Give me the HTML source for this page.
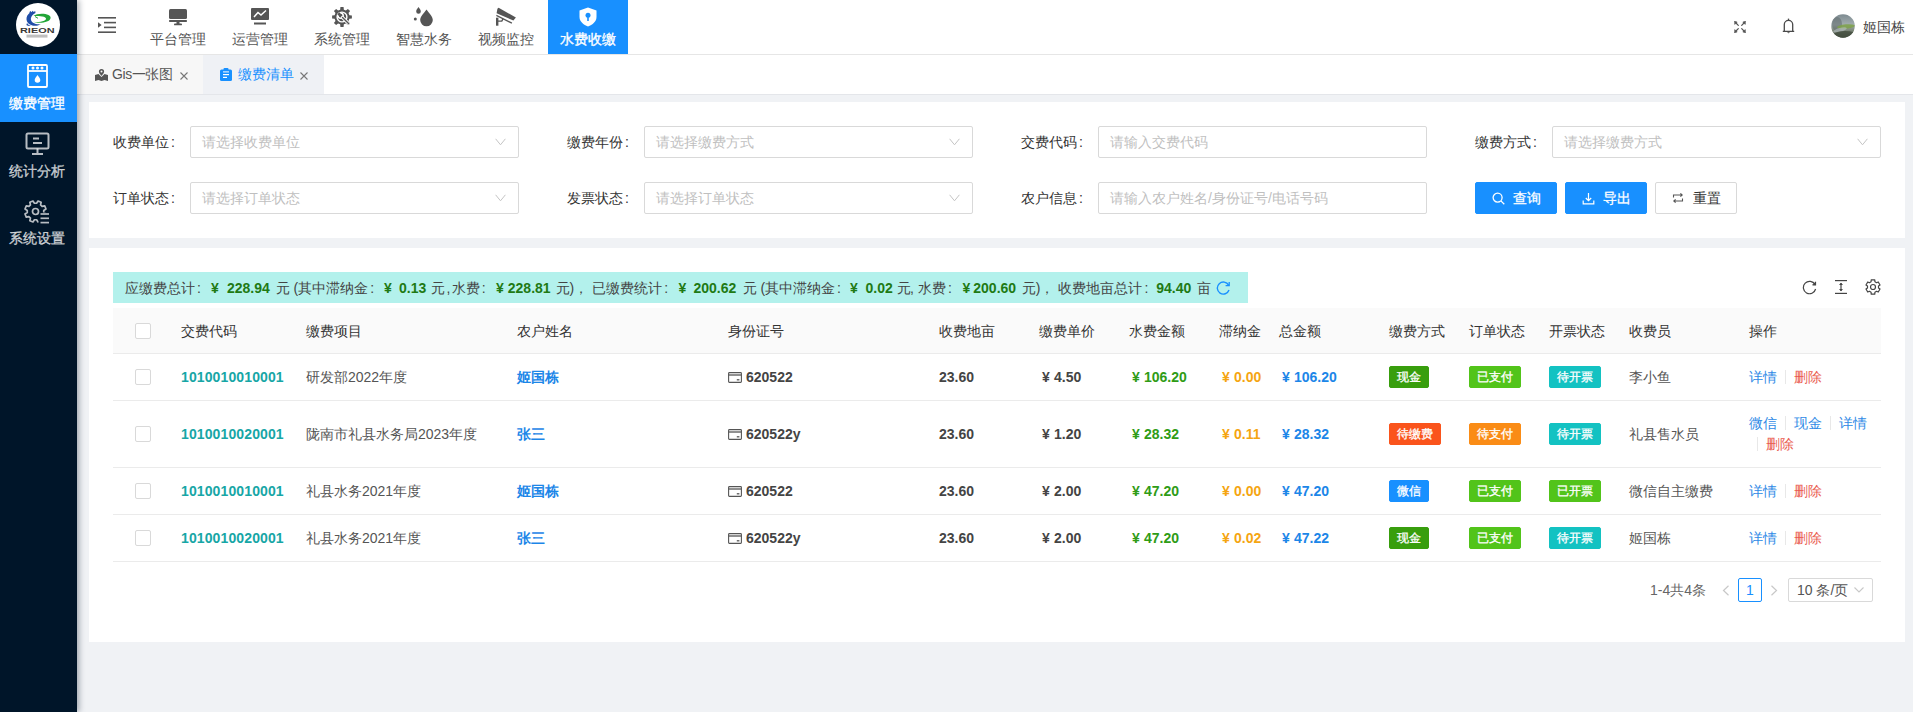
<!DOCTYPE html>
<html><head><meta charset="utf-8">
<style>
*{box-sizing:border-box;margin:0;padding:0}
html,body{width:1913px;height:712px;overflow:hidden}
body{background:#f0f2f5;font-family:"Liberation Sans",sans-serif;font-size:14px;color:#333;position:relative}
.abs{position:absolute}
#side{left:0;top:0;width:77px;height:712px;background:#001529;box-shadow:2px 0 6px rgba(0,21,41,.35);z-index:5}
#logo{left:16px;top:3px;width:44px;height:44px;border-radius:50%;background:#fff}
.sitem{left:0;width:77px;height:68px;color:rgba(255,255,255,.7);text-align:center}
.sitem .t{-webkit-text-stroke:0.35px currentColor;position:absolute;left:0;width:77px;text-align:center;font-size:14px;line-height:20px}
#header{left:77px;top:0;width:1836px;height:55px;background:#fff;border-bottom:1px solid #e6e6e6}
.nav{top:0;width:80px;height:54px;color:#555;text-align:center}
.nav .t{position:absolute;left:0;top:29px;width:80px;line-height:20px;font-size:14px}
.nav svg{position:absolute;left:31px;top:8px}
.nav.on{background:#1890ff;color:#fff}
.nav.on .t{-webkit-text-stroke:0.35px #fff}
#tabs{left:77px;top:55px;width:1836px;height:40px;background:#fff;border-bottom:1px solid #e4e6ea}
.tab{top:0;height:39px;line-height:39px;font-size:14px}
.card{background:#fff;left:89px;width:1816px}
.lbl{font-size:14px;color:#333;line-height:32px;height:32px;text-align:right;width:77px}
.inp{height:32px;width:329px;border:1px solid #d9d9d9;border-radius:2px;background:#fff;color:#bfbfbf;line-height:30px;padding-left:11px;font-size:14px}
.inp svg{position:absolute;right:12px;top:11px}
.colon{display:inline-block;margin:0 0 0 2px}
.btn{top:182px;width:82px;height:32px;border-radius:2px;line-height:30px;font-size:14px}
.btn.p{background:#1890ff;color:#fff;border:1px solid #1890ff;-webkit-text-stroke:0.3px #fff}
.btn.d{background:#fff;color:#333;border:1px solid #d9d9d9}
.sum{left:113px;top:272px;width:1135px;height:31px;background:#b3f1ec;line-height:33px;color:#444;white-space:nowrap}
.sum span{position:absolute;top:0}
.g{color:#1f7a14;font-weight:bold}
.th{left:113px;top:308px;width:1768px;height:46px;background:#fafafa;border-bottom:1px solid #ebebeb}
.tr{left:113px;width:1768px;border-bottom:1px solid #ebebeb;background:#fff}
.c{position:absolute;white-space:nowrap;color:#555}
.th .c{color:#333}
.cb{position:absolute;left:22px;width:16px;height:16px;border:1px solid #d9d9d9;border-radius:2px;background:#fff}
.c.code{color:#17a6a6;font-weight:bold;letter-spacing:0.12px}
.c.name{color:#1c86e8;font-weight:bold}
.c.bold{font-weight:bold;color:#444}
.y{display:inline-block;width:15px;padding-left:3px}
.tag{-webkit-text-stroke:0.3px #fff;display:inline-block;position:relative;top:-1px;height:22px;line-height:20px;padding:0 7px;border-radius:2px;color:#fff;font-size:12px;border:1px solid transparent}
.lk{color:#2f8ae6}
.del{color:#ea5b4f}
.c.fee{color:#2f9c16;font-weight:bold}
.c.late{color:#f5a511;font-weight:bold}
.c.tot{color:#1c86e8;font-weight:bold}

.dv{display:inline-block;width:1px;height:14px;background:#e8e8e8;vertical-align:-2px;margin:0 8px}
</style></head><body>

<!-- SIDEBAR -->
<div id="side" class="abs">
  <div id="logo" class="abs">
    <svg width="44" height="44" viewBox="0 0 44 44">
      <path d="M13 9.5 l1.5-1.5 1 1.2 1.2-1.4 1 1.3 1.5-1.2 0.3 2.2 c-2.5 1.2-4.2 3-4.6 5.2-.4 2.6 1.6 4.8 5 5.6 1.6.4 3.4.4 5 .1-2.4 1.6-5.6 2.3-8.6 1.6-3.4-.8-5.6-3.2-5.8-6-.2-2.6.9-5 3.5-7.1z" fill="#1f4ea8"/>
      <path d="M11 20 c1 1.5 2.5 2.5 4 3 -1.8.2-3.5-.2-4.6-1z" fill="#1f4ea8"/>
      <path d="M17.5 13 c3-2.6 10.5-3.2 15-1 3.4 1.7 2.6 5-1.6 6.6 -4 1.6-10 1.6-13.4.2 2.6.5 7.8.3 10.6-1 2.6-1.2 2.6-3-.2-4 -2.8-1-7.4-.9-10.4-.8z" fill="#22a537"/>
      <path d="M19 13.5 l3 1.8" stroke="#22a537" stroke-width="1"/>
      <text x="4" y="30.2" font-family="Liberation Sans" font-size="7.4" font-weight="bold" fill="#3b3836" textLength="34.5" lengthAdjust="spacingAndGlyphs">RIEON</text>
      <rect x="10.5" y="31.6" width="21" height="3" fill="#8a8a8a" opacity=".55"/>
    </svg>
  </div>
  <div class="sitem abs" style="top:54px;background:#1890ff;color:#fff">
    <svg class="abs" style="left:27px;top:10px" width="21" height="24" viewBox="0 0 21 24" fill="none" stroke="#fff" stroke-width="1.8">
      <rect x="1" y="1" width="19" height="22" rx="1"/>
      <line x1="1" y1="7" x2="20" y2="7"/>
      <circle cx="6" cy="4" r=".6" fill="#fff"/><circle cx="10.5" cy="4" r=".6" fill="#fff"/><circle cx="15" cy="4" r=".6" fill="#fff"/>
      <path d="M10.5 11c-1.5 2-2.8 3.6-2.8 5a2.8 2.8 0 0 0 5.6 0c0-1.4-1.3-3-2.8-5z" fill="#fff" stroke="none"/>
    </svg>
    <div class="t" style="top:39px;left:-2px">缴费管理</div>
  </div>
  <div class="sitem abs" style="top:122px">
    <svg class="abs" style="left:25px;top:10px" width="25" height="24" viewBox="0 0 25 24" fill="none" stroke="rgba(255,255,255,.72)" stroke-width="2">
      <rect x="1.5" y="1.5" width="22" height="15" rx="1.5"/>
      <line x1="8" y1="6.5" x2="14" y2="6.5"/><line x1="8" y1="11" x2="17" y2="11"/>
      <line x1="12.5" y1="16.5" x2="12.5" y2="21"/><line x1="7" y1="22" x2="18" y2="22"/>
    </svg>
    <div class="t" style="top:39px;left:-2px">统计分析</div>
  </div>
  <div class="sitem abs" style="top:190px">
    <svg class="abs" style="left:24px;top:9px" width="26" height="26" viewBox="0 0 26 26">
      <path d="M12.58 4.27 L14.02 2.00 L17.14 3.29 L16.55 5.92 L18.08 7.45 L20.71 6.86 L22.00 9.98 L19.73 11.42 L19.73 13.58 L22.00 15.02 L20.71 18.14 L18.08 17.55 L16.55 19.08 L17.14 21.71 L14.02 23.00 L12.58 20.73 L10.42 20.73 L8.98 23.00 L5.86 21.71 L6.45 19.08 L4.92 17.55 L2.29 18.14 L1.00 15.02 L3.27 13.58 L3.27 11.42 L1.00 9.98 L2.29 6.86 L4.92 7.45 L6.45 5.92 L5.86 3.29 L8.98 2.00 L10.42 4.27Z" fill="none" stroke="rgba(255,255,255,.72)" stroke-width="1.7" stroke-linejoin="round"/>
      <rect x="14.5" y="13.5" width="12" height="12.5" fill="#001529"/>
      <circle cx="11.5" cy="12.5" r="3" fill="none" stroke="rgba(255,255,255,.72)" stroke-width="1.7"/>
      <g stroke="rgba(255,255,255,.72)" stroke-width="1.7"><line x1="16.5" y1="15" x2="25" y2="15"/><line x1="16.5" y1="19.3" x2="25" y2="19.3"/><line x1="16.5" y1="23.6" x2="25" y2="23.6"/></g>
    </svg>
    <div class="t" style="top:38px;left:-2px">系统设置</div>
  </div>
</div>

<!-- HEADER -->
<div id="header" class="abs">
  <svg class="abs" style="left:21px;top:17px" width="18" height="16" viewBox="0 0 18 16" fill="#555">
    <rect x="0" y="0" width="18" height="1.6"/><rect x="6" y="4.8" width="12" height="1.6"/><rect x="6" y="9.6" width="12" height="1.6"/><rect x="0" y="14.4" width="18" height="1.6"/>
    <path d="M0 5.2 L3.6 8 L0 10.8z"/>
  </svg>
  <div class="nav abs" style="left:61px">
    <svg width="18" height="17" viewBox="0 0 18 17" fill="#555" style="top:9px"><rect x="0" y="0" width="18" height="10" rx="1.5"/><rect x="0" y="11" width="18" height="2" rx=".8"/><rect x="7.5" y="13" width="3" height="2"/><rect x="5" y="14.5" width="8" height="1.8" rx=".9"/></svg>
    <div class="t">平台管理</div></div>
  <div class="nav abs" style="left:143px">
    <svg width="18" height="17" viewBox="0 0 18 17"><rect x="0" y="0" width="18" height="12" rx="1" fill="#555"/><path d="M3 9 L7 4.5 L10 7 L15 2.5" fill="none" stroke="#fff" stroke-width="1.5"/><rect x="3" y="14.5" width="12" height="2" fill="#555"/></svg>
    <div class="t">运营管理</div></div>
  <div class="nav abs" style="left:225px">
    <svg width="20" height="20" viewBox="0 0 20 20" style="left:30px;top:7px">
      <path fill="#555" d="M8.16 2.63 L8.44 0.12 L11.56 0.12 L11.84 2.63 L13.91 3.49 L15.88 1.91 L18.09 4.12 L16.51 6.09 L17.37 8.16 L19.88 8.44 L19.88 11.56 L17.37 11.84 L16.51 13.91 L18.09 15.88 L15.88 18.09 L13.91 16.51 L11.84 17.37 L11.56 19.88 L8.44 19.88 L8.16 17.37 L6.09 16.51 L4.12 18.09 L1.91 15.88 L3.49 13.91 L2.63 11.84 L0.12 11.56 L0.12 8.44 L2.63 8.16 L3.49 6.09 L1.91 4.12 L4.12 1.91 L6.09 3.49Z"/>
      <circle cx="10" cy="10" r="5.6" fill="#fff"/>
      <circle cx="10" cy="10" r="4.2" fill="#555"/>
      <circle cx="8.6" cy="8.6" r="2.6" fill="none" stroke="#fff" stroke-width="1.5"/>
      <path d="M8 6 L6 8" stroke="#555" stroke-width="2"/>
      <path d="M10.5 10.5 L17.2 17.2" stroke="#fff" stroke-width="3.2" stroke-linecap="round"/>
      <path d="M10.5 10.5 L16.8 16.8" stroke="#555" stroke-width="1.4" stroke-linecap="round"/>
    </svg>
    <div class="t">系统管理</div></div>
  <div class="nav abs" style="left:307px">
    <svg width="22" height="21" viewBox="0 0 22 21" style="left:28px;top:6px" fill="#555">
      <path d="M14.5 3.5 C11.5 7.5 8.2 10.8 8.2 14 a6.3 6.3 0 0 0 12.6 0 c0-3.2-3.3-6.5-6.3-10.5z"/>
      <path d="M6.5 1 C5.3 2.8 4.2 4 4.2 5.4 a2.3 2.3 0 0 0 4.6 0 c0-1.4-1.1-2.6-2.3-4.4z"/>
      <circle cx="3.3" cy="13" r="1.5"/>
    </svg>
    <div class="t">智慧水务</div></div>
  <div class="nav abs" style="left:389px">
    <svg width="24" height="21" viewBox="0 0 24 21" style="left:28px;top:6px" fill="#555">
      <path d="M4.6 1.8 Q3.6 2 3.4 3 L2.6 7.3 L19.4 14.6 L21.9 11.4z"/>
      <path d="M2.6 8.7 L18.2 16.6 L17.6 17.8 L2.1 9.9z"/>
      <rect x="2" y="11.7" width="2.4" height="8"/>
      <path d="M4 14.4 H7.3 L8.4 12.4 L9.8 13.1 L8.2 15.8 H4z"/>
    </svg>
    <div class="t">视频监控</div></div>
  <div class="nav abs on" style="left:471px">
    <svg width="18" height="20" viewBox="0 0 18 20" style="left:31px;top:7px">
      <path d="M9 0.5 L17.5 3.5 V10 C17.5 14.5 13.5 17.8 9 19.5 C4.5 17.8 0.5 14.5 0.5 10 V3.5z" fill="#fff"/>
      <circle cx="9" cy="8.2" r="2.5" fill="#1890ff"/><rect x="8.2" y="9" width="1.6" height="5" fill="#1890ff"/>
    </svg>
    <div class="t">水费收缴</div></div>
  <svg class="abs" style="left:1657px;top:21px" width="12" height="12" viewBox="0 0 12 12" fill="#555" stroke="#555" stroke-width="1.2" stroke-linecap="round">
    <path d="M1.5 1.5 L4.3 4.3 M10.5 1.5 L7.7 4.3 M1.5 10.5 L4.3 7.7 M10.5 10.5 L7.7 7.7"/>
    <path d="M0.3 0.3 L3.2 1 L1 3.2z M11.7 0.3 L8.8 1 L11 3.2z M0.3 11.7 L3.2 11 L1 8.8z M11.7 11.7 L8.8 11 L11 8.8z" stroke-width="0.6"/>
  </svg>
  <svg class="abs" style="left:1705px;top:18px" width="13" height="16" viewBox="0 0 13 16" fill="none" stroke="#4a4a4a" stroke-width="1.3">
    <path d="M2.3 13 V6.6 a4.2 4.2 0 0 1 8.4 0 V13 M0.8 13.3 H12.2"/><path d="M6.5 0.6 V2.3"/><path d="M5 14 h3 l-1.5 1.6z" fill="#777" stroke="none"/>
  </svg>
  <svg class="abs" style="left:1754px;top:14px" width="24" height="24" viewBox="0 0 24 24">
    <defs><clipPath id="av"><circle cx="12" cy="12" r="11.8"/></clipPath>
    <linearGradient id="avg" x1="0" y1="0" x2="0" y2="1"><stop offset="0" stop-color="#7d8a90"/><stop offset=".45" stop-color="#a3aeb0"/><stop offset=".7" stop-color="#7b8577"/><stop offset="1" stop-color="#3f4a3c"/></linearGradient></defs>
    <g clip-path="url(#av)">
      <rect width="24" height="24" fill="url(#avg)"/>
      <ellipse cx="6" cy="10" rx="5" ry="7" fill="#5e6a6c" opacity=".55"/>
      <ellipse cx="15" cy="12.5" rx="9" ry="2.2" fill="#7ea24a" opacity=".85" transform="rotate(-5 15 12.5)"/>
      <ellipse cx="9" cy="16" rx="7" ry="2" fill="#b9c2c4" opacity=".6" transform="rotate(-15 9 16)"/>
      <ellipse cx="14" cy="21" rx="12" ry="4" fill="#434d3f" opacity=".8"/>
    </g>
  </svg>
  <div class="abs" style="left:1786px;top:17px;line-height:20px;color:#444">姬国栋</div>
</div>

<!-- TABS -->
<div id="tabs" class="abs">
  <div class="tab abs" style="left:3px;width:123px;background:#f7f7f7;color:#555">
    <svg class="abs" style="left:15px;top:14px" width="13" height="12" viewBox="0 0 13 12" fill="#555">
      <path d="M6.5 0 a2.6 2.6 0 0 0-2.6 2.6 c0 1.8 2.6 4.3 2.6 4.3 s2.6-2.5 2.6-4.3 A2.6 2.6 0 0 0 6.5 0z M6.5 1.6 a1 1 0 1 1 0 2 a1 1 0 1 1 0-2z"/>
      <path d="M0 6 L3.5 5 L6.5 8 L9.5 5 L13 6 V12 L9.5 11 L6.5 12 L3.5 11 L0 12z"/>
    </svg>
    <span class="abs" style="left:32px;line-height:39px;letter-spacing:-0.4px">Gis一张图</span>
    <svg class="abs" style="left:100px;top:17px" width="8" height="8" viewBox="0 0 8 8" stroke="#777" stroke-width="1.1"><path d="M0.5 0.5 L7.5 7.5 M7.5 0.5 L0.5 7.5"/></svg>
  </div>
  <div class="tab abs" style="left:126px;width:121px;background:#eff1f5;color:#1890ff">
    <svg class="abs" style="left:17px;top:13px" width="12" height="13" viewBox="0 0 12 13">
      <rect x="0" y="1.5" width="12" height="11.5" rx="1.5" fill="#1890ff"/><rect x="3.5" y="0" width="5" height="3" rx="1" fill="#1890ff"/>
      <rect x="3" y="6" width="6" height="1.2" fill="#fff"/><rect x="3" y="8.8" width="4" height="1.2" fill="#fff"/><rect x="3" y="3.4" width="6" height="1" fill="#fff"/>
    </svg>
    <span class="abs" style="left:35px;line-height:39px">缴费清单</span>
    <svg class="abs" style="left:97px;top:17px" width="8" height="8" viewBox="0 0 8 8" stroke="#777" stroke-width="1.1"><path d="M0.5 0.5 L7.5 7.5 M7.5 0.5 L0.5 7.5"/></svg>
  </div>
</div>

<!-- SEARCH CARD -->
<div class="card abs" style="top:102px;height:136px"></div>
<div class="lbl abs" style="left:98px;top:126px">收费单位<span class="colon">:</span></div>
<div class="inp abs" style="left:190px;top:126px">请选择收费单位<svg width="11" height="8" viewBox="0 0 11 8" fill="none" stroke="#c4c4c4" stroke-width="1"><path d="M0.6 0.8 L5.5 6.8 L10.4 0.8"/></svg></div>
<div class="lbl abs" style="left:552px;top:126px">缴费年份<span class="colon">:</span></div>
<div class="inp abs" style="left:644px;top:126px">请选择缴费方式<svg width="11" height="8" viewBox="0 0 11 8" fill="none" stroke="#c4c4c4" stroke-width="1"><path d="M0.6 0.8 L5.5 6.8 L10.4 0.8"/></svg></div>
<div class="lbl abs" style="left:1006px;top:126px">交费代码<span class="colon">:</span></div>
<div class="inp abs" style="left:1098px;top:126px">请输入交费代码</div>
<div class="lbl abs" style="left:1460px;top:126px">缴费方式<span class="colon">:</span></div>
<div class="inp abs" style="left:1552px;top:126px">请选择缴费方式<svg width="11" height="8" viewBox="0 0 11 8" fill="none" stroke="#c4c4c4" stroke-width="1"><path d="M0.6 0.8 L5.5 6.8 L10.4 0.8"/></svg></div>
<div class="lbl abs" style="left:98px;top:182px">订单状态<span class="colon">:</span></div>
<div class="inp abs" style="left:190px;top:182px">请选择订单状态<svg width="11" height="8" viewBox="0 0 11 8" fill="none" stroke="#c4c4c4" stroke-width="1"><path d="M0.6 0.8 L5.5 6.8 L10.4 0.8"/></svg></div>
<div class="lbl abs" style="left:552px;top:182px">发票状态<span class="colon">:</span></div>
<div class="inp abs" style="left:644px;top:182px">请选择订单状态<svg width="11" height="8" viewBox="0 0 11 8" fill="none" stroke="#c4c4c4" stroke-width="1"><path d="M0.6 0.8 L5.5 6.8 L10.4 0.8"/></svg></div>
<div class="lbl abs" style="left:1006px;top:182px">农户信息<span class="colon">:</span></div>
<div class="inp abs" style="left:1098px;top:182px">请输入农户姓名/身份证号/电话号码</div>
<div class="btn p abs" style="left:1475px">
  <svg class="abs" style="left:16px;top:9px" width="13" height="13" viewBox="0 0 13 13" fill="none" stroke="#fff" stroke-width="1.3"><circle cx="5.6" cy="5.6" r="4.5"/><path d="M8.9 8.9 L12.3 12.3"/></svg>
  <span class="abs" style="left:37px">查询</span></div>
<div class="btn p abs" style="left:1565px">
  <svg class="abs" style="left:16px;top:9px" width="13" height="13" viewBox="0 0 13 13" fill="none" stroke="#fff" stroke-width="1.2"><path d="M6.5 1 V8.5 M3.8 6 L6.5 8.6 L9.2 6 M1.2 8.5 V11.8 H11.8 V8.5"/></svg>
  <span class="abs" style="left:37px">导出</span></div>
<div class="btn d abs" style="left:1655px">
  <svg class="abs" style="left:16px;top:9px" width="12" height="12" viewBox="0 0 12 12" fill="none" stroke="#555" stroke-width="1.1"><path d="M1.5 5.5 V3 H10 M8.4 1.3 L10.2 3 L8.4 4.7"/><path d="M10.5 6.5 V9 H2 M3.6 10.7 L1.8 9 L3.6 7.3"/></svg>
  <span class="abs" style="left:37px">重置</span></div>

<!-- TABLE CARD -->
<div class="card abs" style="top:248px;height:394px"></div>
<div class="sum abs">
  <span style="left:12.0px">应缴费总计<i style="font-style:normal;margin-left:2px">:</i></span>
  <span class=g style="left:98.0px">¥</span>
  <span class=g style="left:114.0px">228.94</span>
  <span style="left:162.6px">元 (其中滞纳金<i style="font-style:normal;margin-left:2px">:</i></span>
  <span class=g style="left:271.0px">¥</span>
  <span class=g style="left:286.0px">0.13</span>
  <span style="left:318.0px">元</span>
  <span style="left:333.5px">,</span>
  <span style="left:338.8px">水费<i style="font-style:normal;margin-left:2px">:</i></span>
  <span class=g style="left:383.0px">¥</span>
  <span class=g style="left:394.8px">228.81</span>
  <span style="left:442.5px">元)，</span>
  <span style="left:479.2px">已缴费统计<i style="font-style:normal;margin-left:2px">:</i></span>
  <span class=g style="left:565.4px">¥</span>
  <span class=g style="left:580.4px">200.62</span>
  <span style="left:629.5px">元 (其中滞纳金<i style="font-style:normal;margin-left:2px">:</i></span>
  <span class=g style="left:737.0px">¥</span>
  <span class=g style="left:752.5px">0.02</span>
  <span style="left:784.2px">元</span>
  <span style="left:797.0px">,</span>
  <span style="left:805.1px">水费<i style="font-style:normal;margin-left:2px">:</i></span>
  <span class=g style="left:849.4px">¥</span>
  <span class=g style="left:860.3px">200.60</span>
  <span style="left:908.8px">元)，</span>
  <span style="left:945.4px">收费地亩总计<i style="font-style:normal;margin-left:2px">:</i></span>
  <span class=g style="left:1043.3px">94.40</span>
  <span style="left:1084.0px">亩</span>
  <svg class="abs" style="left:1103px;top:9px" width="15" height="14" viewBox="0 0 15 14" fill="none" stroke="#1890ff" stroke-width="1.4"><path d="M12.6 4.2 A6 6 0 1 0 13 9"/><path d="M13.2 1 V4.6 H9.6" stroke-width="1.3"/></svg>
</div>
<svg class="abs" style="left:1802px;top:280px" width="15" height="15" viewBox="0 0 15 15" fill="none" stroke="#444" stroke-width="1.2"><path d="M13 4.5 A6.2 6.2 0 1 0 13.6 9"/><path d="M13.5 1.8 V4.8 H10.5" fill="#444"/></svg>
<svg class="abs" style="left:1835px;top:280px" width="12" height="14" viewBox="0 0 12 14" fill="#444"><rect x="0" y="0" width="12" height="1.2"/><rect x="0" y="12.8" width="12" height="1.2"/><rect x="5.4" y="3" width="1.2" height="8"/><path d="M6 2.8 L8 5 H4z M6 11.2 L8 9 H4z"/></svg>
<svg class="abs" style="left:1865px;top:279px" width="16" height="16" viewBox="0 0 16 16" fill="none" stroke="#444" stroke-width="1.2" stroke-linejoin="round"><path d="M6.08 2.74 L6.23 0.92 L9.77 0.92 L9.92 2.74 L11.60 3.71 L13.25 2.93 L15.02 5.99 L13.51 7.03 L13.51 8.97 L15.02 10.01 L13.25 13.07 L11.60 12.29 L9.92 13.26 L9.77 15.08 L6.23 15.08 L6.08 13.26 L4.40 12.29 L2.75 13.07 L0.98 10.01 L2.49 8.97 L2.49 7.03 L0.98 5.99 L2.75 2.93 L4.40 3.71Z"/><circle cx="8" cy="8" r="2.5"/></svg>
<div class="th abs">
  <div class="cb" style="top:15px"></div>
  <div class="c" style="left:68px;top:12px;line-height:22px">交费代码</div>
  <div class="c" style="left:193px;top:12px;line-height:22px">缴费项目</div>
  <div class="c" style="left:404px;top:12px;line-height:22px">农户姓名</div>
  <div class="c" style="left:615px;top:12px;line-height:22px">身份证号</div>
  <div class="c" style="left:826px;top:12px;line-height:22px">收费地亩</div>
  <div class="c" style="left:926px;top:12px;line-height:22px">缴费单价</div>
  <div class="c" style="left:1016px;top:12px;line-height:22px">水费金额</div>
  <div class="c" style="left:1106px;top:12px;line-height:22px">滞纳金</div>
  <div class="c" style="left:1166px;top:12px;line-height:22px">总金额</div>
  <div class="c" style="left:1276px;top:12px;line-height:22px">缴费方式</div>
  <div class="c" style="left:1356px;top:12px;line-height:22px">订单状态</div>
  <div class="c" style="left:1436px;top:12px;line-height:22px">开票状态</div>
  <div class="c" style="left:1516px;top:12px;line-height:22px">收费员</div>
  <div class="c" style="left:1636px;top:12px;line-height:22px">操作</div>
</div>
<div class="tr abs" style="top:354px;height:47px">
  <div class="cb" style="top:15px"></div>
  <div class="c code" style="left:68px;top:12px;line-height:22px">1010010010001</div>
  <div class="c" style="left:193px;top:12px;line-height:22px">研发部2022年度</div>
  <div class="c name" style="left:404px;top:12px;line-height:22px">姬国栋</div>
  <div class="c bold" style="left:615px;top:12px;line-height:22px"><svg width="14" height="11" viewBox="0 0 14 11" fill="none" stroke="#555" stroke-width="1.1" style="vertical-align:-1px;margin-right:4px"><rect x="0.6" y="0.6" width="12.8" height="9.8" rx="0.8"/><path d="M0.6 3 H13.4" stroke-width="1.3"/><path d="M8.8 7.8 H11.4" stroke-width="1.3"/></svg>620522</div>
  <div class="c bold" style="left:826px;top:12px;line-height:22px">23.60</div>
  <div class="c bold" style="left:926px;top:12px;line-height:22px"><span class="y">¥</span>4.50</div>
  <div class="c fee" style="left:1016px;top:12px;line-height:22px"><span class="y">¥</span>106.20</div>
  <div class="c late" style="left:1106px;top:12px;line-height:22px"><span class="y">¥</span>0.00</div>
  <div class="c tot" style="left:1166px;top:12px;line-height:22px"><span class="y">¥</span>106.20</div>
  <div class="c" style="left:1276px;top:12px;line-height:22px"><span class="tag" style="background:#389e0d;border-color:#389e0d">现金</span></div>
  <div class="c" style="left:1356px;top:12px;line-height:22px"><span class="tag" style="background:#52c41a;border-color:#52c41a">已支付</span></div>
  <div class="c" style="left:1436px;top:12px;line-height:22px"><span class="tag" style="background:#13c2c2;border-color:#13c2c2">待开票</span></div>
  <div class="c" style="left:1516px;top:12px;line-height:22px">李小鱼</div>
  <div class="c" style="left:1636px;top:12px;line-height:22px"><span class="lk">详情</span><span class="dv"></span><span class="del">删除</span></div>
</div>
<div class="tr abs" style="top:401px;height:67px">
  <div class="cb" style="top:25px"></div>
  <div class="c code" style="left:68px;top:22px;line-height:22px">1010010020001</div>
  <div class="c" style="left:193px;top:22px;line-height:22px">陇南市礼县水务局2023年度</div>
  <div class="c name" style="left:404px;top:22px;line-height:22px">张三</div>
  <div class="c bold" style="left:615px;top:22px;line-height:22px"><svg width="14" height="11" viewBox="0 0 14 11" fill="none" stroke="#555" stroke-width="1.1" style="vertical-align:-1px;margin-right:4px"><rect x="0.6" y="0.6" width="12.8" height="9.8" rx="0.8"/><path d="M0.6 3 H13.4" stroke-width="1.3"/><path d="M8.8 7.8 H11.4" stroke-width="1.3"/></svg>620522y</div>
  <div class="c bold" style="left:826px;top:22px;line-height:22px">23.60</div>
  <div class="c bold" style="left:926px;top:22px;line-height:22px"><span class="y">¥</span>1.20</div>
  <div class="c fee" style="left:1016px;top:22px;line-height:22px"><span class="y">¥</span>28.32</div>
  <div class="c late" style="left:1106px;top:22px;line-height:22px"><span class="y">¥</span>0.11</div>
  <div class="c tot" style="left:1166px;top:22px;line-height:22px"><span class="y">¥</span>28.32</div>
  <div class="c" style="left:1276px;top:22px;line-height:22px"><span class="tag" style="background:#fa541c;border-color:#fa541c">待缴费</span></div>
  <div class="c" style="left:1356px;top:22px;line-height:22px"><span class="tag" style="background:#fa8c16;border-color:#fa8c16">待支付</span></div>
  <div class="c" style="left:1436px;top:22px;line-height:22px"><span class="tag" style="background:#13c2c2;border-color:#13c2c2">待开票</span></div>
  <div class="c" style="left:1516px;top:22px;line-height:22px">礼县售水员</div>
  <div class="c ops" style="left:1636px;top:12px;width:124px;white-space:normal;line-height:21px"><span class="lk">微信</span><span class="dv"></span><span class="lk">现金</span><span class="dv"></span><span class="lk">详情</span><span class="dv"></span><span class="del">删除</span></div>
</div>
<div class="tr abs" style="top:468px;height:47px">
  <div class="cb" style="top:15px"></div>
  <div class="c code" style="left:68px;top:12px;line-height:22px">1010010010001</div>
  <div class="c" style="left:193px;top:12px;line-height:22px">礼县水务2021年度</div>
  <div class="c name" style="left:404px;top:12px;line-height:22px">姬国栋</div>
  <div class="c bold" style="left:615px;top:12px;line-height:22px"><svg width="14" height="11" viewBox="0 0 14 11" fill="none" stroke="#555" stroke-width="1.1" style="vertical-align:-1px;margin-right:4px"><rect x="0.6" y="0.6" width="12.8" height="9.8" rx="0.8"/><path d="M0.6 3 H13.4" stroke-width="1.3"/><path d="M8.8 7.8 H11.4" stroke-width="1.3"/></svg>620522</div>
  <div class="c bold" style="left:826px;top:12px;line-height:22px">23.60</div>
  <div class="c bold" style="left:926px;top:12px;line-height:22px"><span class="y">¥</span>2.00</div>
  <div class="c fee" style="left:1016px;top:12px;line-height:22px"><span class="y">¥</span>47.20</div>
  <div class="c late" style="left:1106px;top:12px;line-height:22px"><span class="y">¥</span>0.00</div>
  <div class="c tot" style="left:1166px;top:12px;line-height:22px"><span class="y">¥</span>47.20</div>
  <div class="c" style="left:1276px;top:12px;line-height:22px"><span class="tag" style="background:#1890ff;border-color:#1890ff">微信</span></div>
  <div class="c" style="left:1356px;top:12px;line-height:22px"><span class="tag" style="background:#52c41a;border-color:#52c41a">已支付</span></div>
  <div class="c" style="left:1436px;top:12px;line-height:22px"><span class="tag" style="background:#52c41a;border-color:#52c41a">已开票</span></div>
  <div class="c" style="left:1516px;top:12px;line-height:22px">微信自主缴费</div>
  <div class="c" style="left:1636px;top:12px;line-height:22px"><span class="lk">详情</span><span class="dv"></span><span class="del">删除</span></div>
</div>
<div class="tr abs" style="top:515px;height:47px">
  <div class="cb" style="top:15px"></div>
  <div class="c code" style="left:68px;top:12px;line-height:22px">1010010020001</div>
  <div class="c" style="left:193px;top:12px;line-height:22px">礼县水务2021年度</div>
  <div class="c name" style="left:404px;top:12px;line-height:22px">张三</div>
  <div class="c bold" style="left:615px;top:12px;line-height:22px"><svg width="14" height="11" viewBox="0 0 14 11" fill="none" stroke="#555" stroke-width="1.1" style="vertical-align:-1px;margin-right:4px"><rect x="0.6" y="0.6" width="12.8" height="9.8" rx="0.8"/><path d="M0.6 3 H13.4" stroke-width="1.3"/><path d="M8.8 7.8 H11.4" stroke-width="1.3"/></svg>620522y</div>
  <div class="c bold" style="left:826px;top:12px;line-height:22px">23.60</div>
  <div class="c bold" style="left:926px;top:12px;line-height:22px"><span class="y">¥</span>2.00</div>
  <div class="c fee" style="left:1016px;top:12px;line-height:22px"><span class="y">¥</span>47.20</div>
  <div class="c late" style="left:1106px;top:12px;line-height:22px"><span class="y">¥</span>0.02</div>
  <div class="c tot" style="left:1166px;top:12px;line-height:22px"><span class="y">¥</span>47.22</div>
  <div class="c" style="left:1276px;top:12px;line-height:22px"><span class="tag" style="background:#389e0d;border-color:#389e0d">现金</span></div>
  <div class="c" style="left:1356px;top:12px;line-height:22px"><span class="tag" style="background:#52c41a;border-color:#52c41a">已支付</span></div>
  <div class="c" style="left:1436px;top:12px;line-height:22px"><span class="tag" style="background:#13c2c2;border-color:#13c2c2">待开票</span></div>
  <div class="c" style="left:1516px;top:12px;line-height:22px">姬国栋</div>
  <div class="c" style="left:1636px;top:12px;line-height:22px"><span class="lk">详情</span><span class="dv"></span><span class="del">删除</span></div>
</div>
<div class="abs" style="left:1650px;top:580px;line-height:20px;color:#666">1-4共4条</div>
<svg class="abs" style="left:1722px;top:585px" width="8" height="11" viewBox="0 0 8 11" fill="none" stroke="#c8c8c8" stroke-width="1.2"><path d="M6.5 0.8 L1.5 5.5 L6.5 10.2"/></svg>
<div class="abs" style="left:1738px;top:578px;width:24px;height:24px;border:1px solid #1890ff;border-radius:2px;color:#1890ff;text-align:center;line-height:22px">1</div>
<svg class="abs" style="left:1770px;top:585px" width="8" height="11" viewBox="0 0 8 11" fill="none" stroke="#c8c8c8" stroke-width="1.2"><path d="M1.5 0.8 L6.5 5.5 L1.5 10.2"/></svg>
<div class="abs" style="left:1788px;top:578px;width:85px;height:24px;border:1px solid #d9d9d9;border-radius:2px;color:#555;line-height:22px;padding-left:8px">10 条/页
<svg class="abs" style="left:65px;top:8px" width="10" height="6" viewBox="0 0 10 6" fill="none" stroke="#c8c8c8" stroke-width="1.1"><path d="M0.5 0.5 L5 5 L9.5 0.5"/></svg></div>
</body></html>
